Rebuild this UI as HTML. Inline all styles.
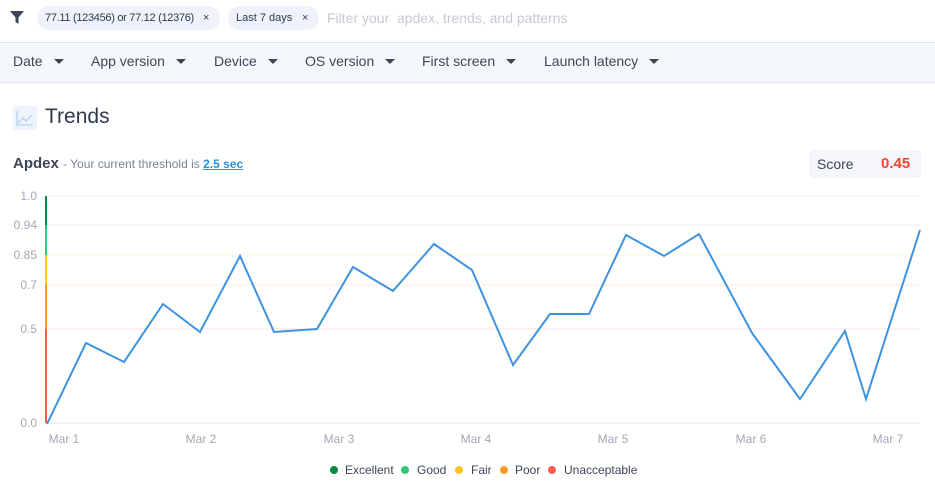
<!DOCTYPE html>
<html><head><style>
body{margin:0;width:935px;height:490px;overflow:hidden;background:#fff;font-family:"Liberation Sans",sans-serif;color:#3c4659;position:relative}
.a{position:absolute;white-space:nowrap}
.chip{position:absolute;top:6px;height:24px;border-radius:12px;background:#eef3fb;font-size:11px;line-height:24px;color:#2f3a4d;box-sizing:border-box;overflow:hidden}
.chip span{position:absolute;top:0}
.bar{position:absolute;top:42px;left:0;width:935px;height:39px;background:#f4f8fd;border-top:1px solid #dfe6f0;border-bottom:1px solid #dfe6f0}
.f{position:absolute;top:10px;font-size:14px;color:#3c4659}
.f:after{content:"";display:inline-block;margin-left:11px;border-left:5px solid transparent;border-right:5px solid transparent;border-top:5px solid #3c4659;vertical-align:2px}
</style></head><body>
<svg class="a" style="left:10px;top:11px" width="14" height="14" viewBox="0 0 14 14"><path d="M0 0H14L8.5 6.5V13L5.5 11V6.5Z" fill="#3c4659"/></svg>
<div class="chip" style="left:37px;width:183px"><span style="left:8px;letter-spacing:-0.3px">77.11 (123456) or 77.12 (12376)</span><span style="left:166px">×</span></div>
<div class="chip" style="left:228px;width:91px"><span style="left:8px">Last 7 days</span><span style="left:74px">×</span></div>
<div class="a" style="left:327px;top:10px;font-size:14px;color:#c5cad3">Filter your &nbsp;apdex, trends, and patterns</div>
<div class="bar">
<span class="f" style="left:13px">Date</span>
<span class="f" style="left:91px">App version</span>
<span class="f" style="left:214px">Device</span>
<span class="f" style="left:305px">OS version</span>
<span class="f" style="left:422px">First screen</span>
<span class="f" style="left:544px">Launch latency</span>
</div>
<div class="a" style="left:13px;top:106px;width:24px;height:24px;background:#eef4fc;border-radius:3px"></div>
<svg class="a" style="left:16px;top:110px" width="18" height="16"><path d="M1 1V15H17M2 13L7 8L10 11L16 5" stroke="#a8c6ea" fill="none" stroke-width="1"/></svg>
<div class="a" style="left:45px;top:105px;font-size:21px;color:#2f3a4d">Trends</div>
<div class="a" style="left:13px;top:155px;font-size:15px;font-weight:bold;color:#3c4659">Apdex <span style="font-size:12px;font-weight:normal;color:#7a8494">- Your current threshold is <span style="color:#2b8fd9;font-weight:bold;text-decoration:underline">2.5 sec</span></span></div>
<div class="a" style="left:809px;top:150px;width:112px;height:28px;background:#f4f6f9;border-radius:4px"></div>
<div class="a" style="left:817px;top:156px;font-size:14px;color:#3c4659">Score</div>
<div class="a" style="left:881px;top:155px;font-size:15px;font-weight:bold;color:#f0452c">0.45</div>
<svg class="a" style="left:0;top:0" width="935" height="490">
<g stroke-width="1">
<line x1="46" x2="920" y1="196" y2="196" stroke="#e3f2ef"/>
<line x1="46" x2="920" y1="225" y2="225" stroke="#e3f2ef"/>
<line x1="46" x2="920" y1="255" y2="255" stroke="#fdf3dc"/>
<line x1="46" x2="920" y1="285" y2="285" stroke="#fdeedd"/>
<line x1="46" x2="920" y1="329" y2="329" stroke="#fde3df"/>
<line x1="46" x2="920" y1="423" y2="423" stroke="#e4e8ee"/>
</g>
<g stroke-width="2">
<line x1="46" x2="46" y1="196" y2="225" stroke="#0a8a44"/>
<line x1="46" x2="46" y1="225" y2="255" stroke="#2ecc7a"/>
<line x1="46" x2="46" y1="255" y2="285" stroke="#fcc425"/>
<line x1="46" x2="46" y1="285" y2="329" stroke="#fc9a2c"/>
<line x1="46" x2="46" y1="329" y2="423" stroke="#f0604a"/>
</g>
<g font-size="12" fill="#a1a8b5" text-anchor="end" font-family="Liberation Sans">
<text x="37" y="200">1.0</text><text x="37" y="229">0.94</text><text x="37" y="259">0.85</text><text x="37" y="289">0.7</text><text x="37" y="333">0.5</text><text x="37" y="427">0.0</text>
</g>
<g font-size="12" fill="#a1a8b5" text-anchor="middle" font-family="Liberation Sans">
<text x="64" y="443">Mar 1</text><text x="201" y="443">Mar 2</text><text x="339" y="443">Mar 3</text><text x="476" y="443">Mar 4</text><text x="613" y="443">Mar 5</text><text x="751" y="443">Mar 6</text><text x="888" y="443">Mar 7</text>
</g>
<polyline fill="none" stroke="#3d93e0" stroke-width="2" stroke-linejoin="miter" points="47,424 86,343 124,362 163,304 200,332 240,256 274,332 317,329 353,267 393,291 434,244 472,270 513,365 550,314 589,314 626,235 664,256 699,234 752,333 800,399 845,331 866,399 920,230"/>
<g font-size="12" fill="#3c4659" font-family="Liberation Sans">
<circle cx="334" cy="470" r="4" fill="#0a8a44"/><text x="345" y="474">Excellent</text>
<circle cx="405" cy="470" r="4" fill="#2ecc7a"/><text x="417" y="474">Good</text>
<circle cx="459" cy="470" r="4" fill="#fcc425"/><text x="471" y="474">Fair</text>
<circle cx="504" cy="470" r="4" fill="#fc9a2c"/><text x="515" y="474">Poor</text>
<circle cx="552" cy="470" r="4" fill="#f0604a"/><text x="564" y="474">Unacceptable</text>
</g>
</svg>
</body></html>
